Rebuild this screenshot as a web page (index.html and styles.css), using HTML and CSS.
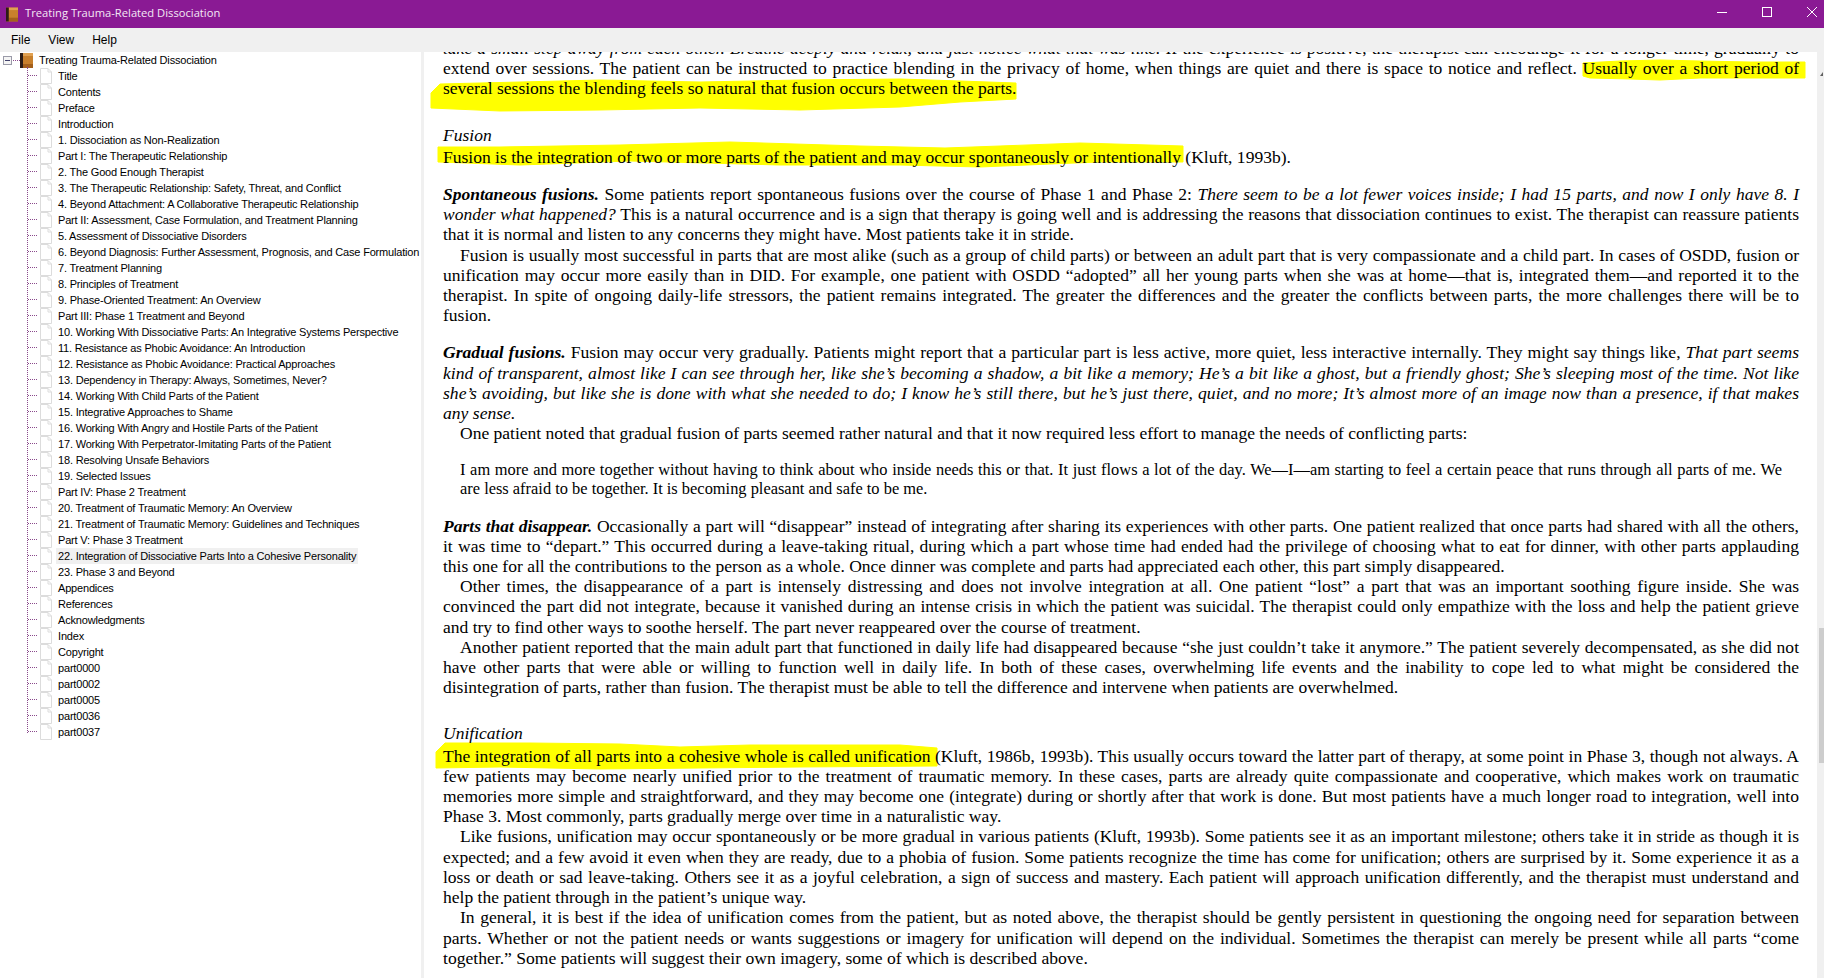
FILE: index.html
```html
<!DOCTYPE html>
<html lang="en">
<head>
    <meta charset="UTF-8">
    <title>Treating Trauma-Related Dissociation</title>
    <link rel="stylesheet" href="styles.css">
</head>
<body>

<svg class="defs" width="0" height="0">
    <symbol id="doc" viewBox="0 0 12 16">
        <path d="M.5 .5H8L11.5 4V15.5H.5Z" fill="#fff" stroke="#dcdcdc"/>
        <path d="M8 .5V4H11.5" fill="none" stroke="#dcdcdc"/>
    </symbol>
    <symbol id="book" viewBox="0 0 13 15">
        <rect x="0" y="0" width="13" height="15" fill="#c27c2c"/>
        <rect x="3" y="0" width="10" height="3" fill="#e0a050"/>
        <rect x="3" y="3" width="10" height="8" fill="#c8802c"/>
        <rect x="3" y="11" width="10" height="4" fill="#a4601c"/>
        <rect x="0" y="0" width="3" height="15" fill="#2c1c14"/>
    </symbol>
</svg>

<header class="titlebar">
    <svg class="title-icon"><use href="#book"/></svg>
    <span class="title-text">Treating Trauma-Related Dissociation</span>
    <div class="window-buttons">
        <svg width="10" height="10" viewBox="0 0 10 10"><path d="M0 5.5H10" stroke="#fff"/></svg>
        <svg width="10" height="10" viewBox="0 0 10 10"><rect x=".5" y=".5" width="9" height="9" fill="none" stroke="#fff"/></svg>
        <svg width="10" height="10" viewBox="0 0 10 10"><path d="M0 0L10 10M10 0L0 10" stroke="#fff"/></svg>
    </div>
</header>

<nav class="menubar">
    <span>File</span>
    <span>View</span>
    <span>Help</span>
</nav>

<main class="app">
    <aside class="sidebar">
        <div class="tree-root">
            <span class="expander"></span>
            <span class="root-dots"></span>
            <svg class="root-icon"><use href="#book"/></svg>
            <span class="tree-label">Treating Trauma-Related Dissociation</span>
        </div>
        <ul class="tree">
            <li><svg class="doc"><use href="#doc"/></svg><span class="tree-label">Title</span></li>
            <li><svg class="doc"><use href="#doc"/></svg><span class="tree-label">Contents</span></li>
            <li><svg class="doc"><use href="#doc"/></svg><span class="tree-label">Preface</span></li>
            <li><svg class="doc"><use href="#doc"/></svg><span class="tree-label">Introduction</span></li>
            <li><svg class="doc"><use href="#doc"/></svg><span class="tree-label">1. Dissociation as Non-Realization</span></li>
            <li><svg class="doc"><use href="#doc"/></svg><span class="tree-label">Part I: The Therapeutic Relationship</span></li>
            <li><svg class="doc"><use href="#doc"/></svg><span class="tree-label">2. The Good Enough Therapist</span></li>
            <li><svg class="doc"><use href="#doc"/></svg><span class="tree-label">3. The Therapeutic Relationship: Safety, Threat, and Conflict</span></li>
            <li><svg class="doc"><use href="#doc"/></svg><span class="tree-label">4. Beyond Attachment: A Collaborative Therapeutic Relationship</span></li>
            <li><svg class="doc"><use href="#doc"/></svg><span class="tree-label">Part II: Assessment, Case Formulation, and Treatment Planning</span></li>
            <li><svg class="doc"><use href="#doc"/></svg><span class="tree-label">5. Assessment of Dissociative Disorders</span></li>
            <li><svg class="doc"><use href="#doc"/></svg><span class="tree-label">6. Beyond Diagnosis: Further Assessment, Prognosis, and Case Formulation</span></li>
            <li><svg class="doc"><use href="#doc"/></svg><span class="tree-label">7. Treatment Planning</span></li>
            <li><svg class="doc"><use href="#doc"/></svg><span class="tree-label">8. Principles of Treatment</span></li>
            <li><svg class="doc"><use href="#doc"/></svg><span class="tree-label">9. Phase-Oriented Treatment: An Overview</span></li>
            <li><svg class="doc"><use href="#doc"/></svg><span class="tree-label">Part III: Phase 1 Treatment and Beyond</span></li>
            <li><svg class="doc"><use href="#doc"/></svg><span class="tree-label">10. Working With Dissociative Parts: An Integrative Systems Perspective</span></li>
            <li><svg class="doc"><use href="#doc"/></svg><span class="tree-label">11. Resistance as Phobic Avoidance: An Introduction</span></li>
            <li><svg class="doc"><use href="#doc"/></svg><span class="tree-label">12. Resistance as Phobic Avoidance: Practical Approaches</span></li>
            <li><svg class="doc"><use href="#doc"/></svg><span class="tree-label">13. Dependency in Therapy: Always, Sometimes, Never?</span></li>
            <li><svg class="doc"><use href="#doc"/></svg><span class="tree-label">14. Working With Child Parts of the Patient</span></li>
            <li><svg class="doc"><use href="#doc"/></svg><span class="tree-label">15. Integrative Approaches to Shame</span></li>
            <li><svg class="doc"><use href="#doc"/></svg><span class="tree-label">16. Working With Angry and Hostile Parts of the Patient</span></li>
            <li><svg class="doc"><use href="#doc"/></svg><span class="tree-label">17. Working With Perpetrator-Imitating Parts of the Patient</span></li>
            <li><svg class="doc"><use href="#doc"/></svg><span class="tree-label">18. Resolving Unsafe Behaviors</span></li>
            <li><svg class="doc"><use href="#doc"/></svg><span class="tree-label">19. Selected Issues</span></li>
            <li><svg class="doc"><use href="#doc"/></svg><span class="tree-label">Part IV: Phase 2 Treatment</span></li>
            <li><svg class="doc"><use href="#doc"/></svg><span class="tree-label">20. Treatment of Traumatic Memory: An Overview</span></li>
            <li><svg class="doc"><use href="#doc"/></svg><span class="tree-label">21. Treatment of Traumatic Memory: Guidelines and Techniques</span></li>
            <li><svg class="doc"><use href="#doc"/></svg><span class="tree-label">Part V: Phase 3 Treatment</span></li>
            <li><svg class="doc"><use href="#doc"/></svg><span class="tree-label selected">22. Integration of Dissociative Parts Into a Cohesive Personality</span></li>
            <li><svg class="doc"><use href="#doc"/></svg><span class="tree-label">23. Phase 3 and Beyond</span></li>
            <li><svg class="doc"><use href="#doc"/></svg><span class="tree-label">Appendices</span></li>
            <li><svg class="doc"><use href="#doc"/></svg><span class="tree-label">References</span></li>
            <li><svg class="doc"><use href="#doc"/></svg><span class="tree-label">Acknowledgments</span></li>
            <li><svg class="doc"><use href="#doc"/></svg><span class="tree-label">Index</span></li>
            <li><svg class="doc"><use href="#doc"/></svg><span class="tree-label">Copyright</span></li>
            <li><svg class="doc"><use href="#doc"/></svg><span class="tree-label">part0000</span></li>
            <li><svg class="doc"><use href="#doc"/></svg><span class="tree-label">part0002</span></li>
            <li><svg class="doc"><use href="#doc"/></svg><span class="tree-label">part0005</span></li>
            <li><svg class="doc"><use href="#doc"/></svg><span class="tree-label">part0036</span></li>
            <li><svg class="doc"><use href="#doc"/></svg><span class="tree-label">part0037</span></li>
        </ul>
    </aside>

    <section class="reader">
        <!-- marker strokes, coordinates are page pixels -->
        <svg class="marks" viewBox="424 52 1393 926">
            <polygon points="1583,63 1620,61 1660,60 1700,61 1750,62 1805,62 1805,78 1760,78 1700,78 1660,80 1630,79 1590,78 1583,76"/>
            <polygon points="431,93 440,84 520,82 600,80 700,82 800,80 900,79 960,81 1016,83 1016,99 960,102 900,107 800,110 700,108 600,110 500,111 431,108"/>
            <polygon points="438,147 500,147 620,145 730,142 860,146 945,148 1000,146 1080,143 1183,146 1183,162 1100,162 1050,164 980,167 900,165 780,165 630,161 520,165 438,162"/>
            <polygon points="436,752 445,743 530,743 620,744 680,747 750,745 900,745 937,748 937,766 800,767 700,768 600,769 500,767 436,768"/>
        </svg>
        <div class="text">
            <p><i>take a small step away from each other. Breathe deeply and relax, and just notice what that was like.</i> If the experience is positive, the therapist can encourage it for a longer time, gradually to extend over sessions. The patient can be instructed to practice blending in the privacy of home, when things are quiet and there is space to notice and reflect. Usually over a short period of several sessions the blending feels so natural that fusion occurs between the parts.</p>

            <h3>Fusion</h3>
            <p class="after-head">Fusion is the integration of two or more parts of the patient and may occur spontaneously or intentionally (Kluft, 1993b).</p>

            <p><b><i>Spontaneous fusions.</i></b> Some patients report spontaneous fusions over the course of Phase 1 and Phase 2: <i>There seem to be a lot fewer voices inside; I had 15 parts, and now I only have 8. I wonder what happened?</i> This is a natural occurrence and is a sign that therapy is going well and is addressing the reasons that dissociation continues to exist. The therapist can reassure patients that it is normal and listen to any concerns they might have. Most patients take it in stride.</p>
            <p class="indent">Fusion is usually most successful in parts that are most alike (such as a group of child parts) or between an adult part that is very compassionate and a child part. In cases of OSDD, fusion or unification may occur more easily than in DID. For example, one patient with OSDD &ldquo;adopted&rdquo; all her young parts when she was at home&mdash;that is, integrated them&mdash;and reported it to the therapist. In spite of ongoing daily-life stressors, the patient remains integrated. The greater the differences and the greater the conflicts between parts, the more challenges there will be to fusion.</p>

            <p class="wide"><b><i>Gradual fusions.</i></b> Fusion may occur very gradually. Patients might report that a particular part is less active, more quiet, less interactive internally. They might say things like, <i>That part seems kind of transparent, almost like I can see through her, like she&rsquo;s becoming a shadow, a bit like a memory; He&rsquo;s a bit like a ghost, but a friendly ghost; She&rsquo;s sleeping most of the time. Not like she&rsquo;s avoiding, but like she is done with what she needed to do; I know he&rsquo;s still there, but he&rsquo;s just there, quiet, and no more; It&rsquo;s almost more of an image now than a presence, if that makes any sense.</i></p>
            <p class="indent">One patient noted that gradual fusion of parts seemed rather natural and that it now required less effort to manage the needs of conflicting parts:</p>

            <p class="quote">I am more and more together without having to think about who inside needs this or that. It just flows a lot of the day. We&mdash;I&mdash;am starting to feel a certain peace that runs through all parts of me. We are less afraid to be together. It is becoming pleasant and safe to be me.</p>

            <p class="after-quote"><b><i>Parts that disappear.</i></b> Occasionally a part will &ldquo;disappear&rdquo; instead of integrating after sharing its experiences with other parts. One patient realized that once parts had shared with all the others, it was time to &ldquo;depart.&rdquo; This occurred during a leave-taking ritual, during which a part whose time had ended had the privilege of choosing what to eat for dinner, with other parts applauding this one for all the contributions to the person as a whole. Once dinner was complete and parts had appreciated each other, this part simply disappeared.</p>
            <p class="indent">Other times, the disappearance of a part is intensely distressing and does not involve integration at all. One patient &ldquo;lost&rdquo; a part that was an important soothing figure inside. She was convinced the part did not integrate, because it vanished during an intense crisis in which the patient was suicidal. The therapist could only empathize with the loss and help the patient grieve and try to find other ways to soothe herself. The part never reappeared over the course of treatment.</p>
            <p class="indent">Another patient reported that the main adult part that functioned in daily life had disappeared because &ldquo;she just couldn&rsquo;t take it anymore.&rdquo; The patient severely decompensated, as she did not have other parts that were able or willing to function well in daily life. In both of these cases, overwhelming life events and the inability to cope led to what might be considered the disintegration of parts, rather than fusion. The therapist must be able to tell the difference and intervene when patients are overwhelmed.</p>

            <h3 class="tight">Unification</h3>
            <p class="after-head">The integration of all parts into a cohesive whole is called unification (Kluft, 1986b, 1993b). This usually occurs toward the latter part of therapy, at some point in Phase 3, though not always. A few patients may become nearly unified prior to the treatment of traumatic memory. In these cases, parts are already quite compassionate and cooperative, which makes work on traumatic memories more simple and straightforward, and they may become one (integrate) during or shortly after that work is done. But most patients have a much longer road to integration, well into Phase 3. Most commonly, parts gradually merge over time in a naturalistic way.</p>
            <p class="indent">Like fusions, unification may occur spontaneously or be more gradual in various patients (Kluft, 1993b). Some patients see it as an important milestone; others take it in stride as though it is expected; and a few avoid it even when they are ready, due to a phobia of fusion. Some patients recognize the time has come for unification; others are surprised by it. Some experience it as a loss or death or sad leave-taking. Others see it as a joyful celebration, a sign of success and mastery. Each patient will approach unification differently, and the therapist must understand and help the patient through in the patient&rsquo;s unique way.</p>
            <p class="indent wide">In general, it is best if the idea of unification comes from the patient, but as noted above, the therapist should be gently persistent in questioning the ongoing need for separation between parts. Whether or not the patient needs or wants suggestions or imagery for unification will depend on the individual. Sometimes the therapist can merely be present while all parts &ldquo;come together.&rdquo; Some patients will suggest their own imagery, some of which is described above.</p>
        </div>
    </section>

    <div class="scrollbar">
        <span class="scroll-arrow"></span>
        <span class="scroll-thumb"></span>
    </div>
</main>

</body>
</html>
```
FILE: styles.css
```css
html, body {
    margin: 0;
    padding: 0;
    height: 978px;
    overflow: hidden;
    background-color: #fff;
}

body {
    display: flex;
    flex-direction: column;
    color: #000;
}

.defs {
    position: absolute;
}

/* title bar */
.titlebar {
    display: flex;
    align-items: center;
    height: 28px;
    flex: none;
    padding-left: 6px;
    background-color: #8a1a94;
    color: #f4e8f5;
    font-family: "Open Sans", sans-serif;
    font-size: 11.2px;
}

.title-icon {
    width: 12px;
    height: 15px;
    margin-right: 7px;
}

.title-text {
    margin-bottom: 3px;
}

.window-buttons {
    display: flex;
    gap: 35px;
    margin-left: auto;
    margin-right: 7px;
    margin-bottom: 4px;
}

/* menu */
.menubar {
    display: flex;
    align-items: center;
    gap: 18px;
    height: 24px;
    flex: none;
    padding-left: 11px;
    background-color: #f0f0f0;
    font-family: "Liberation Sans", sans-serif;
    font-size: 12px;
}

.app {
    display: flex;
    flex: 1;
    min-height: 0;
}

/* tree */
.sidebar {
    width: 421px;
    flex: none;
    border-right: 3px solid #f0f0f0;
    background-color: #fff;
    font-family: "Liberation Sans", sans-serif;
    font-size: 11px;
    letter-spacing: -.18px;
}

.tree-root {
    display: flex;
    align-items: center;
    height: 16px;
    padding-left: 3px;
}

.expander {
    position: relative;
    width: 9px;
    height: 9px;
    box-sizing: border-box;
    border: 1px solid #9a9aa8;
    background-color: #f4f4f4;
}

.expander::after {
    content: "";
    position: absolute;
    left: 1px;
    top: 3px;
    width: 5px;
    height: 1px;
    background-color: #40406a;
}

.root-dots {
    width: 7px;
    border-top: 1px dotted #8a4a8c;
    margin-left: 1px;
}

.root-icon {
    width: 13px;
    height: 15px;
}

.tree-root .tree-label {
    margin-left: 4px;
}

.tree {
    position: relative;
    list-style: none;
    margin: 0;
    padding: 0;
}

.tree::before {
    content: "";
    position: absolute;
    left: 27px;
    top: -1px;
    bottom: 7px;
    border-left: 1px dotted #8a4a8c;
}

.tree li {
    display: flex;
    align-items: center;
    height: 16px;
    padding-left: 40px;
    position: relative;
}

.tree li::before {
    content: "";
    position: absolute;
    left: 28px;
    top: 7px;
    width: 9px;
    border-top: 1px dotted #8a4a8c;
}

.doc {
    width: 12px;
    height: 16px;
    flex: none;
}

.tree-label {
    padding: 0 2px;
    line-height: 16px;
    white-space: nowrap;
}

.tree li .tree-label {
    margin-left: 4px;
}

.selected {
    background-color: #f0f0f0;
}

/* reading pane */
.reader {
    position: relative;
    flex: 1;
    overflow: hidden;
}

.marks {
    position: absolute;
    left: 0;
    top: 0;
    width: 1393px;
    height: 926px;
}

.marks polygon {
    fill: #ffff00;
    stroke: #ffff00;
    stroke-linejoin: round;
}

.text {
    position: relative;
    margin-top: -14px;
    padding: 0 18px 0 19px;
    font-family: "Liberation Serif", serif;
    font-size: 17.52px;
    line-height: 20.2px;
    text-align: justify;
}

.text p {
    margin: 17px 0 0 0;
}

.text .wide {
    font-size: 17.6px;
}

.text h3 {
    margin: 26px 0 0 0;
    font-size: 17.52px;
    font-weight: normal;
    font-style: italic;
}

.text h3.tight {
    margin-top: 26px;
}

.text p:first-child {
    margin-top: 0;
}

.text .after-head {
    margin-top: 2px;
}

.text .indent {
    margin-top: 0;
    text-indent: 17px;
}

.text .quote {
    margin-top: 18px;
    padding: 0 17px;
    font-size: 16.42px;
    line-height: 18.6px;
}

.text .after-quote {
    margin-top: 17px;
}

/* scrollbar, cut off by the window edge */
.scrollbar {
    position: relative;
    width: 7px;
    flex: none;
    background-color: #f0f0f0;
}

.scroll-arrow {
    position: absolute;
    left: 3px;
    top: 20px;
    width: 0;
    height: 0;
    border-left: 3px solid transparent;
    border-bottom: 4px solid #606060;
}

.scroll-thumb {
    position: absolute;
    left: 2px;
    right: 0;
    top: 576px;
    height: 135px;
    background-color: #cdcdcd;
}
```
